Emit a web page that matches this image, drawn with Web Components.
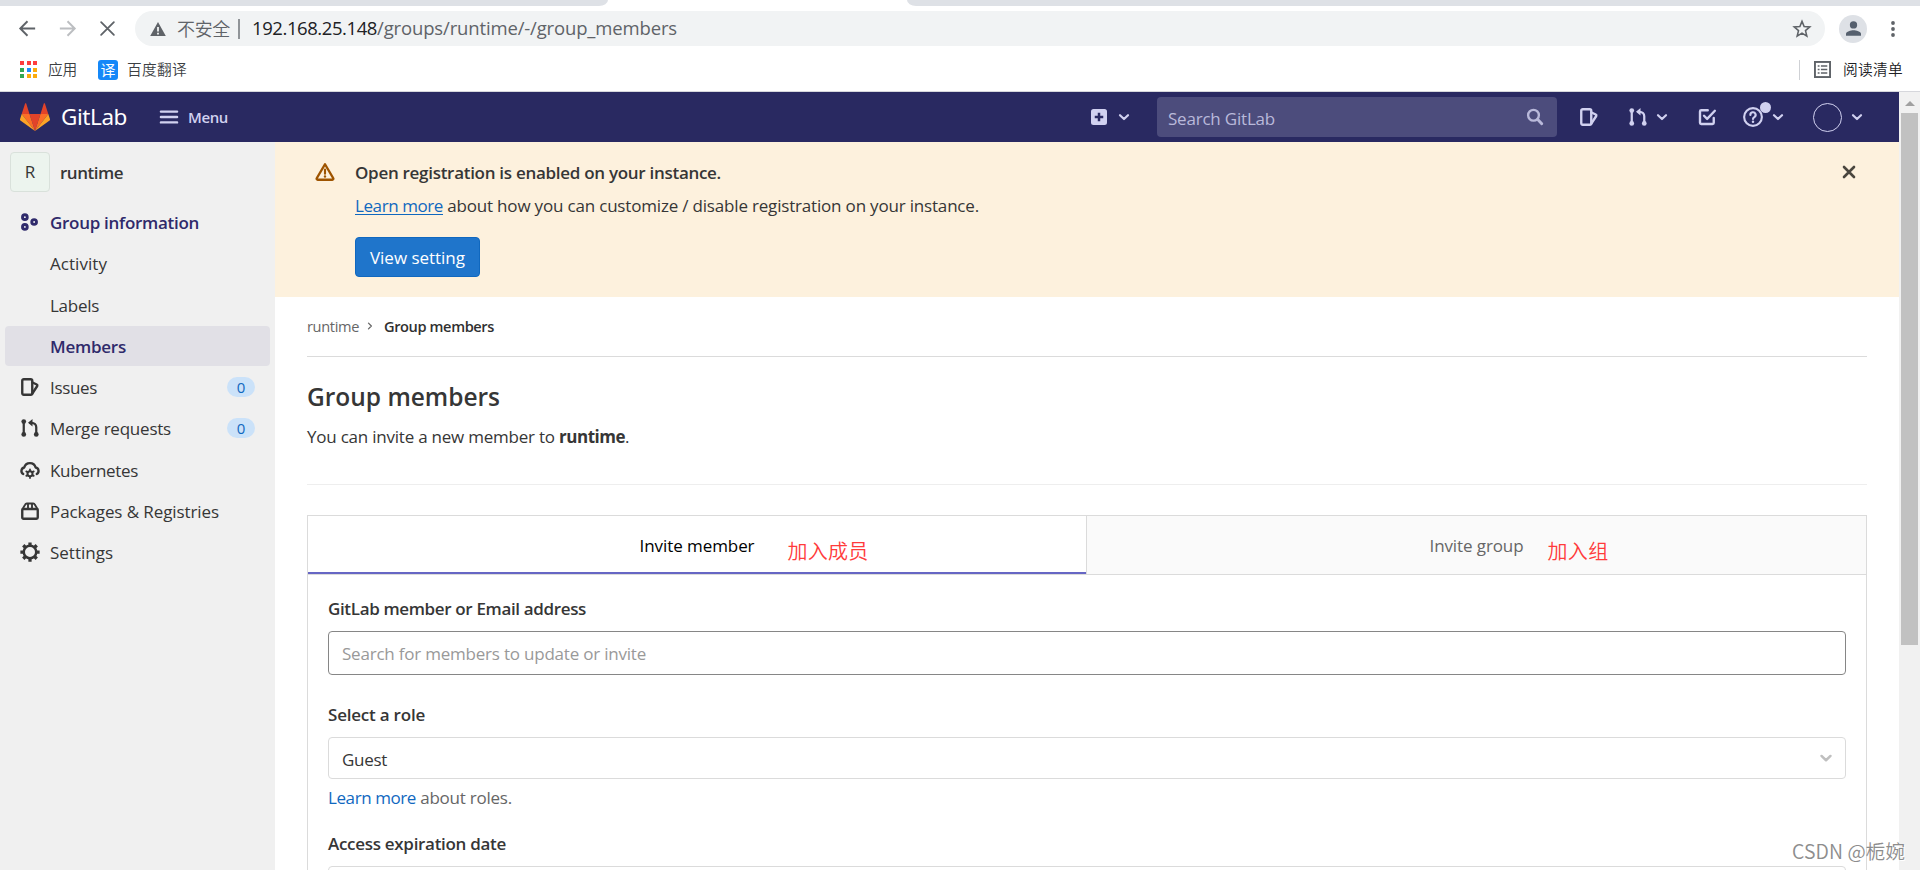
<!DOCTYPE html>
<html lang="en">
<head>
<meta charset="utf-8">
<title>Group members · runtime · GitLab</title>
<style>
  html, body {
    margin: 0;
    height: 100%;
    overflow: hidden;
    background: #fff;
    color: #363636;
    font: 17px/20px "Open Sans", "Noto Sans CJK SC", sans-serif;
  }
</style>
</head>
<body>
<app-window></app-window>

<script>
const ICONS = {
  'chevron-down': '<path d="M4 6.2 8 10l4-3.8" class="s" stroke-width="2.2"/>',
  'chevron-right': '<path d="M6 4.2 9.8 8 6 11.8" class="s"/>',
  'plus-square': '<path fill-rule="evenodd" d="M3.6 1.6h8.8a2 2 0 0 1 2 2v8.8a2 2 0 0 1-2 2H3.6a2 2 0 0 1-2-2V3.6a2 2 0 0 1 2-2ZM7 4.6V7H4.6v2H7v2.4h2V9h2.4V7H9V4.6Z"/>',
  search: '<circle cx="6.8" cy="6.6" r="4.3" class="s" stroke-width="1.9"/><path d="m10.2 10 3.2 3.4" class="s" stroke-width="2.3"/>',
  issues: '<rect x="1.8" y="1.8" width="8" height="12.4" rx="1.2" class="s" stroke-width="1.9"/><path d="M10 4.4 13.4 6a.9.9 0 0 1 .4 1.2L10 13" class="s" stroke-width="1.9"/>',
  'merge-request': '<path d="M3 3v10M13 12.8V7.4a3.6 3.6 0 0 0-3.6-3.6H8" class="s" stroke-width="1.8"/><path d="M10 .8v6L6.4 3.8Z"/><circle cx="3" cy="2.8" r="1.9"/><circle cx="3" cy="13.1" r="1.9"/><circle cx="13" cy="13.1" r="1.9"/>',
  todo: '<path d="M8.6 2.6H3.4a1 1 0 0 0-1 1v9a1 1 0 0 0 1 1h9a1 1 0 0 0 1-1V8.8" class="s" stroke-width="1.9"/><path d="m5.6 7 2.5 2.5L14.3 3" class="s" stroke-width="1.9"/>',
  question: '<circle cx="8" cy="8" r="7.1" class="s"/><path d="M5.9 6.4a2.1 2.1 0 1 1 3.2 1.7c-.8.5-1.1.8-1.1 1.5" class="s"/><circle cx="8" cy="11.8" r="1"/>',
  group: '<g class="s" stroke-width="2.3"><circle cx="3.9" cy="4.1" r="1.9"/><circle cx="3.9" cy="11.9" r="1.9"/><circle cx="11.3" cy="8" r="1.9"/></g>',
  kubernetes: '<path d="M2.6 11.2A2.8 2.8 0 0 1 3.4 6 4.7 4.7 0 0 1 12.5 6a2.8 2.8 0 0 1 .9 5.2" class="s" stroke-width="1.9"/><circle cx="8" cy="10.9" r="2" class="s" stroke-width="1.6"/><path d="M8 7.4v1.2M8 13.2v1.2M5 9.1l1.1.6M9.9 12.1l1.1.6M5 12.7l1.1-.6M9.9 9.7l1.1-.6" class="s" stroke-width="1.4"/>',
  package: '<rect x="1.8" y="6.4" width="12.4" height="7.8" rx="1" class="s" stroke-width="1.9"/><path d="M2 6.4 4.2 2.8A1.4 1.4 0 0 1 5.4 2h5.2c.5 0 1 .3 1.2.8L14 6.4M6.4 2v4M9.6 2v4" class="s" stroke-width="1.5"/>',
  settings: '<circle cx="8" cy="8" r="5" class="s" stroke-width="2"/><path d="M8 .3v3M8 12.7v3M.3 8h3M12.7 8h3M2.6 2.6l2 2M11.4 11.4l2 2M2.6 13.4l2-2M11.4 4.6l2-2" class="s" stroke-width="2.6" style="stroke-linecap:butt"/>',
  warning: '<path d="M8 1.8 14.6 13a.8.8 0 0 1-.7 1.2H2.1a.8.8 0 0 1-.7-1.2Z" class="s" stroke-width="1.9"/><path d="M8 6v3.4" class="s"/><circle cx="8" cy="11.6" r=".95"/>',
  close: '<path d="m4 4 8 8M12 4l-8 8" class="s" stroke-width="2.1"/>',
  menu: '<path d="M.8 3.2h14.4M.8 8h14.4M.8 12.8h14.4" class="s" stroke-width="2.1"/>',
  back: '<path d="M15.2 8H1.4M8 1.2 1.2 8 8 14.8" class="s" stroke-width="1.8" style="stroke-linecap:butt;stroke-linejoin:miter"/>',
  forward: '<path d="M.8 8h13.8M8 1.2 14.8 8 8 14.8" class="s" stroke-width="1.8" style="stroke-linecap:butt;stroke-linejoin:miter"/>',
  stop: '<path d="m1.2 1.2 13.6 13.6M14.8 1.2 1.2 14.8" class="s" stroke-width="1.9"/>',
  insecure: '<path fill-rule="evenodd" d="M8 1 15.8 15H.2ZM7.1 6v4.6h1.8V6ZM7.1 11.7v1.7h1.8v-1.7Z"/>',
  star: '<path d="m8 1.2 1.9 4.6 5 .4-3.8 3.2 1.2 4.9L8 11.7l-4.3 2.6 1.2-4.9-3.8-3.2 5-.4Z" class="s" stroke-width="1.4" style="stroke-linejoin:miter"/>',
  person: '<circle cx="8" cy="4.2" r="3.9"/><path d="M0 15.6v-1.8c0-2.6 5.3-3.9 8-3.9s8 1.3 8 3.9v1.8Z"/>',
  dots: '<circle cx="8" cy="2" r="1.9"/><circle cx="8" cy="8" r="1.9"/><circle cx="8" cy="14" r="1.9"/>',
  reading: '<rect x=".9" y=".9" width="14.2" height="14.2" class="s" stroke-width="1.8" style="stroke-linejoin:miter"/><path d="M3.5 4h1.7v1.5H3.5ZM6.5 4h6v1.5h-6ZM3.5 7.3h1.7v1.5H3.5ZM6.5 7.3h6v1.5h-6ZM3.5 10.6h1.7v1.5H3.5ZM6.5 10.6h6v1.5h-6Z"/>',
};

class GlIcon extends HTMLElement {
  connectedCallback() {
    const size = this.getAttribute('size') || 20;
    this.attachShadow({ mode: 'open' }).innerHTML = `
      <style>
        :host { display: block; flex: none; width: ${size}px; height: ${size}px; }
        svg { display: block; width: 100%; height: 100%; fill: currentColor; overflow: visible; }
        .s { fill: none; stroke: currentColor; stroke-linecap: round; stroke-linejoin: round; }
        .s:not([stroke-width]) { stroke-width: 1.7; }
      </style>
      <svg viewBox="0 0 16 16">${ICONS[this.getAttribute('name')] || ''}</svg>`;
  }
}

// one line of text, tracked so that it takes exactly `w` pixels
class FitText extends HTMLElement {
  connectedCallback() {
    // no blanks in this markup, they would be drawn
    this.attachShadow({ mode: 'open' }).innerHTML =
      '<style>:host { display: inline-block; flex: none; white-space: pre; }</style><slot></slot>';
    const w = Number(this.getAttribute('w'));
    if (!w) return;
    const natural = this.getBoundingClientRect().width;
    const n = Array.from(this.textContent).length;
    this.style.letterSpacing = ((w - natural) / n).toFixed(3) + 'px';
  }
}

class BrowserBar extends HTMLElement {
  connectedCallback() {
    const apps = ['#ff3d3d', '#ff3d3d', '#ff3d3d', '#34a853', '#1a8cff', '#fbab0c', '#34a853', '#fbab0c', '#fbab0c'];
    this.attachShadow({ mode: 'open' }).innerHTML = `
      <style>
        :host { display: flex; flex-direction: column; height: 91px; border-bottom: 1px solid #d6d7dc; background: #fff; color: #5f6368; }
        .tabs { display: flex; justify-content: space-between; height: 6px; }
        .tabs i { background: #dee1e6; }
        .tabs i:first-child { width: 608px; border-bottom-right-radius: 9px 6px; }
        .tabs i:last-child { width: 1013px; border-bottom-left-radius: 9px 6px; }
        .row { display: flex; align-items: center; }
        .address { height: 45px; padding-left: 19px; }
        .nav { display: flex; align-items: center; gap: 23px; width: 116px; }
        .pill { display: flex; align-items: center; box-sizing: border-box; flex: none; width: 1690px; height: 35px; padding: 0 14px 0 15px; border-radius: 18px; background: #f1f3f4; }
        .pill fit-text { margin-bottom: 2px; }
        .state { font: 350 18px/20px "Noto Sans CJK SC", sans-serif; margin-left: 11px; }
        .sep { width: 2px; height: 20px; background: #909498; margin: 0 12px 0 8px; }
        .url { font-size: 18.5px; }
        .host { color: #202124; }
        .star { margin-left: auto; }
        .me { display: grid; place-items: center; flex: none; width: 28px; height: 28px; border-radius: 50%; margin: 0 18px 0 14px; background: #dee1e6; color: #56606e; }
        .marks { height: 37px; padding: 0 17px 0 20px; font: 350 14.7px/20px "Noto Sans CJK SC", sans-serif; color: #3c4043; }
        .marks fit-text { margin-bottom: 2px; }
        .apps { display: grid; grid-template-columns: repeat(3, 4px); gap: 2.5px; margin-right: 11px; }
        .apps i { height: 4px; }
        .yi { display: grid; place-items: center; width: 20px; height: 20px; margin: 0 9px 0 21px; border-radius: 3px; background: #1588f8; color: #fff; font-size: 15px; font-weight: 400; line-height: 18px; }
        .list { display: flex; align-items: center; height: 20px; margin-left: auto; padding-left: 14px; border-left: 1px solid #cfd1d5; color: #202124; }
        .list gl-icon { margin-right: 12px; color: #5f6368; }
      </style>
      <div class="tabs"><i></i><i></i></div>
      <div class="row address">
        <div class="nav">
          <gl-icon name="back" size="17"></gl-icon>
          <gl-icon name="forward" size="17" style="color:#bcbec1"></gl-icon>
          <gl-icon name="stop" size="15" style="margin-left:1px"></gl-icon>
        </div>
        <div class="pill">
          <gl-icon name="insecure" size="16"></gl-icon>
          <fit-text class="state" w="53">不安全</fit-text><i class="sep"></i>
          <fit-text class="url host" w="125">192.168.25.148</fit-text><fit-text class="url" w="300">/groups/runtime/-/group_members</fit-text>
          <gl-icon class="star" name="star" size="18"></gl-icon>
        </div>
        <div class="me"><gl-icon name="person" size="15"></gl-icon></div>
        <gl-icon name="dots" size="16"></gl-icon>
      </div>
      <div class="row marks">
        <div class="apps">${apps.map(c => `<i style="background:${c}"></i>`).join('')}</div>
        <fit-text w="29">应用</fit-text>
        <span class="yi">译</span>
        <fit-text w="60">百度翻译</fit-text>
        <div class="list"><gl-icon name="reading" size="17"></gl-icon><fit-text w="60">阅读清单</fit-text></div>
      </div>`;
  }
}

class GlNavbar extends HTMLElement {
  connectedCallback() {
    this.attachShadow({ mode: 'open' }).innerHTML = `
      <style>
        :host { display: flex; align-items: center; flex: none; height: 50px; padding-left: 20px; background: #292961; color: #d1d1f0; }
        .logo { flex: none; width: 30px; height: 28px; margin-right: 11px; }
        .brand { font: 22.5px/30px "Noto Sans", sans-serif; color: #fff; margin-right: 33px; }
        .menu { font-size: 15px; font-weight: 600; margin-left: 10px; }
        .new { margin-left: 861px; }
        .search { display: flex; align-items: center; justify-content: space-between; box-sizing: border-box; width: 400px; height: 40px; padding: 3px 12px 0 11px; margin: 0 22px 0 25px; border-radius: 4px; background: #4c4c7c; color: #b9b9da; }
        .search gl-icon { margin-bottom: 3px; }
        .help { position: relative; }
        .help::after { content: ""; position: absolute; right: -8px; top: -5px; width: 11px; height: 11px; border-radius: 50%; background: #d1d1f0; }
        .user { box-sizing: border-box; width: 29px; height: 29px; border: 1px solid #d1d1f0; border-radius: 50%; margin: 0 7px 0 27px; }
      </style>
      <svg class="logo" viewBox="0 0 30 28">
        <path fill="#e24329" d="M15 28 20.5 11h-11Z"/>
        <path fill="#fc6d26" d="M15 28 9.5 11H1.7ZM15 28l5.5-17h7.8Z"/>
        <path fill="#fca326" d="M1.7 11 0 16.2c-.1.5 0 1 .4 1.3L15 28ZM28.3 11l1.7 5.2c.1.5 0 1-.4 1.3L15 28Z"/>
        <path fill="#e24329" d="M1.7 11h7.8L6.2.6c-.2-.5-.9-.5-1.1 0ZM28.3 11h-7.8L23.8.6c.2-.5.9-.5 1.1 0Z"/>
      </svg>
      <fit-text class="brand" w="66">GitLab</fit-text>
      <gl-icon name="menu" size="18"></gl-icon>
      <fit-text class="menu" w="40">Menu</fit-text>
      <gl-icon class="new" name="plus-square"></gl-icon>
      <gl-icon name="chevron-down" size="16" style="margin-left:7px"></gl-icon>
      <div class="search"><fit-text w="107">Search GitLab</fit-text><gl-icon name="search"></gl-icon></div>
      <gl-icon name="issues"></gl-icon>
      <gl-icon name="merge-request" style="margin-left:29px"></gl-icon>
      <gl-icon name="chevron-down" size="16" style="margin-left:6px"></gl-icon>
      <gl-icon name="todo" style="margin-left:27px"></gl-icon>
      <gl-icon class="help" name="question" style="margin-left:26px"></gl-icon>
      <gl-icon name="chevron-down" size="16" style="margin-left:7px"></gl-icon>
      <i class="user"></i>
      <gl-icon name="chevron-down" size="16"></gl-icon>`;
  }
}

class SideItem extends HTMLElement {
  connectedCallback() {
    const icon = this.getAttribute('icon');
    const count = this.getAttribute('count');
    this.attachShadow({ mode: 'open' }).innerHTML = `
      <style>
        :host { display: flex; align-items: center; box-sizing: border-box; height: 40px; margin: 0 5px 1.25px; padding: 0 15px; border-radius: 4px; }
        :host([strong]) { color: #2f2a6b; font-weight: 600; }
        :host([active]) { background: #e1e0e6; }
        .icon { width: 30px; flex: none; }
        fit-text { margin-top: 2px; }
        .count { margin-left: auto; width: 28px; height: 20px; border-radius: 10px; background: #cbe2f9; color: #1068bf; font-size: 15px; text-align: center; }
      </style>
      <div class="icon">${icon ? `<gl-icon name="${icon}"></gl-icon>` : ''}</div>
      <fit-text w="${this.getAttribute('w')}">${this.textContent.replace('&', '&amp;')}</fit-text>
      ${count ? `<span class="count">${count}</span>` : ''}`;
  }
}

class GlSidebar extends HTMLElement {
  connectedCallback() {
    this.attachShadow({ mode: 'open' }).innerHTML = `
      <style>
        :host { display: block; flex: none; width: 275px; background: #f0f0f0; }
        .context { display: flex; align-items: center; gap: 10px; height: 40px; padding: 10px; font-weight: 600; }
        .context fit-text { margin-top: 2px; }
        .avatar { box-sizing: border-box; width: 40px; height: 40px; border: 1px solid #d9e1db; border-radius: 4px; background: #ecf4ee; font-weight: 400; text-align: center; line-height: 38px; }
      </style>
      <div class="context"><span class="avatar">R</span><fit-text w="63">runtime</fit-text></div>
      <side-item icon="group" w="149" strong>Group information</side-item>
      <side-item w="57">Activity</side-item>
      <side-item w="49">Labels</side-item>
      <side-item w="76" strong active>Members</side-item>
      <side-item icon="issues" w="47" count="0">Issues</side-item>
      <side-item icon="merge-request" w="121" count="0">Merge requests</side-item>
      <side-item icon="kubernetes" w="88">Kubernetes</side-item>
      <side-item icon="package" w="169">Packages &amp; Registries</side-item>
      <side-item icon="settings" w="63">Settings</side-item>`;
  }
}

class GlAlert extends HTMLElement {
  connectedCallback() {
    this.attachShadow({ mode: 'open' }).innerHTML = `
      <style>
        :host { display: flex; align-items: flex-start; box-sizing: border-box; height: 155px; padding: 20px 40px 20px; background: #fdf1dd; }
        .body { display: flex; flex-direction: column; align-items: flex-start; flex: 1; margin-left: 20px; padding-top: 1px; }
        .title { font-weight: 600; margin-bottom: 13px; }
        .text { display: flex; }
        a { color: #1068bf; }
        a fit-text { text-decoration: underline; text-underline-offset: 2px; text-decoration-thickness: 1px; }
        button { box-sizing: border-box; width: 125px; height: 40px; margin-top: 21px; padding: 2px 0 0; border: 1px solid #1068bf; border-radius: 4px; background: #1f75cb; color: #fff; font: inherit; }
      </style>
      <gl-icon name="warning" style="color:#9e5400"></gl-icon>
      <div class="body">
        <fit-text class="title" w="366">Open registration is enabled on your instance.</fit-text>
        <div class="text"><a><fit-text w="88">Learn more</fit-text></a><fit-text w="536"> about how you can customize / disable registration on your instance.</fit-text></div>
        <button><fit-text w="95">View setting</fit-text></button>
      </div>
      <gl-icon name="close" style="color:#4a463e"></gl-icon>`;
  }
}

class GlBreadcrumbs extends HTMLElement {
  connectedCallback() {
    this.attachShadow({ mode: 'open' }).innerHTML = `
      <style>
        :host { display: flex; align-items: center; box-sizing: border-box; height: 60px; padding-bottom: 1px; border-bottom: 1px solid #dbdbdb; font-size: 14.6px; color: #666; }
        gl-icon { margin: 0 8px 0 5px; }
        .here { color: #303030; font-weight: 600; }
      </style>
      <fit-text w="52">runtime</fit-text><gl-icon name="chevron-right" size="12"></gl-icon><fit-text class="here" w="110">Group members</fit-text>`;
  }
}

class InviteForm extends HTMLElement {
  connectedCallback() {
    this.attachShadow({ mode: 'open' }).innerHTML = `
      <style>
        :host { display: block; box-sizing: border-box; height: 400px; border: 1px solid #dbdbdb; }
        .tabs { display: flex; height: 58px; border-bottom: 1px solid #dbdbdb; }
        .tab { display: grid; place-items: center; box-sizing: border-box; flex: 1; padding-top: 2px; background: #fafafa; color: #666; border-left: 1px solid #dbdbdb; }
        .tab.on { flex: none; width: 778px; padding-top: 4px; background: #fff; color: #000; border-left: 0; border-bottom: 2px solid #6666c4; }
        .tab span { position: relative; }
        .note { position: absolute; left: calc(100% + 24px); top: 4px; color: #ff3b3b; font: 350 20px/22px "Noto Sans CJK SC", sans-serif; }
        .tab.on .note { left: calc(100% + 33px); }
        .fields { display: flex; flex-direction: column; padding: 24px 20px; }
        label { display: flex; font-weight: 600; margin-bottom: 12px; }
        .box { display: flex; align-items: center; justify-content: space-between; box-sizing: border-box; height: 44px; padding: 1px 10px 0 13px; border: 1px solid #868686; border-radius: 4px; color: #999; }
        .box.light { height: 42px; padding-top: 3px; border-color: #dbdbdb; color: #363636; }
        .box gl-icon { color: #bfbfbf; margin-bottom: 3px; }
        .hint { display: flex; margin-top: 9px; color: #666; }
        a { color: #1068bf; }
      </style>
      <div class="tabs">
        <div class="tab on"><span><fit-text w="115">Invite member</fit-text><fit-text class="note" w="81">加入成员</fit-text></span></div>
        <div class="tab"><span><fit-text w="94">Invite group</fit-text><fit-text class="note" w="61">加入组</fit-text></span></div>
      </div>
      <div class="fields">
        <label><fit-text w="258">GitLab member or Email address</fit-text></label>
        <div class="box"><fit-text w="304">Search for members to update or invite</fit-text></div>
        <label style="margin-top:30px"><fit-text w="97">Select a role</fit-text></label>
        <div class="box light"><fit-text w="45">Guest</fit-text><gl-icon name="chevron-down" size="18"></gl-icon></div>
        <div class="hint"><a><fit-text w="88">Learn more</fit-text></a><fit-text w="96"> about roles.</fit-text></div>
        <label style="margin-top:26px"><fit-text w="178">Access expiration date</fit-text></label>
        <div class="box light"></div>
      </div>`;
  }
}

class PageScrollbar extends HTMLElement {
  connectedCallback() {
    this.attachShadow({ mode: 'open' }).innerHTML = `
      <style>
        :host { display: flex; flex-direction: column; align-items: center; flex: none; width: 21px; background: #f1f1f1; }
        .up { width: 0; margin: 9px 0 7px; border: 5px solid transparent; border-top: 0; border-bottom-color: #a0a0a0; }
        .thumb { width: 17px; height: 532px; background: #c1c1c1; }
      </style>
      <i class="up"></i><i class="thumb"></i>`;
  }
}

class AppWindow extends HTMLElement {
  connectedCallback() {
    this.attachShadow({ mode: 'open' }).innerHTML = `
      <style>
        :host { display: flex; flex-direction: column; position: relative; height: 870px; overflow: hidden; }
        .view { display: flex; flex: 1; min-height: 0; }
        .page { display: flex; flex-direction: column; width: 1899px; }
        .columns { display: flex; flex: 1; min-height: 0; }
        main { flex: 1; min-width: 0; overflow: hidden; }
        .content { padding: 0 32px; }
        h3 { display: flex; margin: 25px 0 0; font-size: 24.5px; font-weight: 550; line-height: 30px; }
        p { display: flex; margin: 15px 0 30px; padding-bottom: 37px; border-bottom: 1px solid #eee; }
        .mark { position: absolute; right: 15px; bottom: 7px; font: 350 19.5px/24px "Noto Sans CJK SC", sans-serif; color: #8d8d8d; text-shadow: 1px 1px 0 #fff; }
      </style>
      <browser-bar></browser-bar>
      <div class="view">
        <div class="page">
          <gl-navbar></gl-navbar>
          <div class="columns">
            <gl-sidebar></gl-sidebar>
            <main>
              <gl-alert></gl-alert>
              <div class="content">
                <gl-breadcrumbs></gl-breadcrumbs>
                <h3><fit-text w="193">Group members</fit-text></h3>
                <p><fit-text w="252">You can invite a new member to </fit-text><b><fit-text w="66">runtime</fit-text></b>.</p>
                <invite-form></invite-form>
              </div>
            </main>
          </div>
        </div>
        <page-scrollbar></page-scrollbar>
      </div>
      <fit-text class="mark" w="113">CSDN @栀婉</fit-text>`;
  }
}

customElements.define('app-window', AppWindow);
customElements.define('browser-bar', BrowserBar);
customElements.define('gl-navbar', GlNavbar);
customElements.define('gl-sidebar', GlSidebar);
customElements.define('side-item', SideItem);
customElements.define('gl-alert', GlAlert);
customElements.define('gl-breadcrumbs', GlBreadcrumbs);
customElements.define('invite-form', InviteForm);
customElements.define('page-scrollbar', PageScrollbar);
customElements.define('gl-icon', GlIcon);
// measures itself, so everything around it has to be in place first
customElements.define('fit-text', FitText);
</script>
</body>
</html>
